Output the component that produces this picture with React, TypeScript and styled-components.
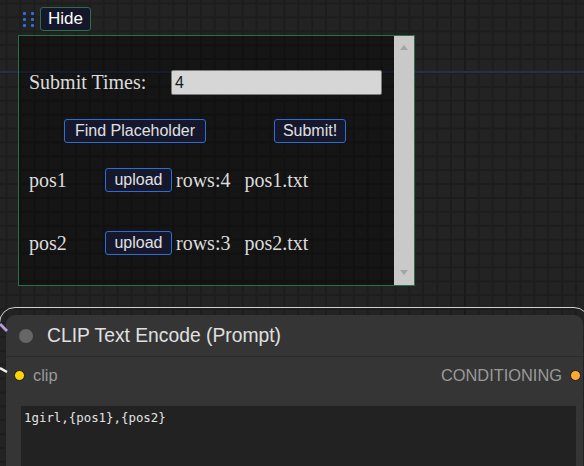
import * as React from 'react';
import styled, { createGlobalStyle } from 'styled-components';

const GlobalStyle = createGlobalStyle`
  html, body {
    margin: 0;
    height: 100%;
    overflow: hidden;
  }
  body {
    background-color: #232323;
    background-image:
      linear-gradient(to bottom, transparent 71px, #27304a 71px, #27304a 73px, transparent 73px),
      linear-gradient(90deg, transparent 464px, #1a1a1a 464px, #1a1a1a 466px, transparent 466px),
      linear-gradient(90deg, #1d1d1d 2px, transparent 2px),
      linear-gradient(#1d1d1d 2px, transparent 2px);
    background-size: 100% 100%, 100% 100%, 13.9px 13.9px, 13.9px 13.9px;
    background-repeat: no-repeat, no-repeat, repeat, repeat;
    background-position: 0 0, 0 0, 5.5px 0, 0 2.5px;
    font-family: 'Liberation Sans', Arial, sans-serif;
  }
`;

const Canvas = styled.div`
  position: relative;
  display: flex;
  flex-direction: column;
  align-items: flex-start;
  height: 466px;
  box-sizing: border-box;
  padding-top: 7px;
  overflow: hidden;
`;

const TopBar = styled.div`
  display: flex;
  align-items: center;
  gap: 5px;
  margin-left: 22px;
`;

const Handle = styled.div`
  display: grid;
  grid-template-columns: repeat(2, 3px);
  grid-auto-rows: 3px;
  column-gap: 5px;
  row-gap: 3px;
  padding: 0 1px;

  span {
    background: #2a6fe6;
    border-radius: 1px;
  }
`;

const HideButton = styled.button`
  height: 24px;
  padding: 0 7px;
  background: #14172a;
  border: 1px solid #2e6c4b;
  border-radius: 3px;
  color: #ffffff;
  font-family: 'Liberation Sans', Arial, sans-serif;
  font-size: 17px;
  line-height: 22px;
`;

const Panel = styled.div`
  display: flex;
  margin: 4px 0 0 18px;
  width: 397px;
  height: 251px;
  flex-shrink: 0;
  box-sizing: border-box;
  border: 1px solid #2e6c4b;
  background: rgba(0, 0, 0, 0.4);
`;

const PanelBody = styled.div`
  flex: 1;
  display: flex;
  flex-direction: column;
  padding: 34px 0 0 10px;
`;

const Row = styled.div<{ $top?: number }>`
  display: flex;
  align-items: center;
  margin-top: ${(p) => p.$top ?? 0}px;
  height: 24px;
`;

const Label = styled.span<{ $width: number }>`
  width: ${(p) => p.$width}px;
  color: #dcdcdc;
  font-family: 'Liberation Serif', 'Times New Roman', serif;
  font-size: 20px;
`;

const SerifText = styled.span<{ $left?: number }>`
  margin-left: ${(p) => p.$left ?? 0}px;
  color: #dcdcdc;
  font-family: 'Liberation Serif', 'Times New Roman', serif;
  font-size: 20px;
`;

const TimesInput = styled.input`
  width: 211px;
  height: 25px;
  box-sizing: border-box;
  margin-top: 1px;
  padding: 0 3px;
  background: #d6d6d6;
  border: 1px solid #7a7a7a;
  border-radius: 2px;
  color: #1a1a1a;
  font-family: 'Liberation Sans', Arial, sans-serif;
  font-size: 16px;
  outline: none;
`;

const BlueButton = styled.button<{ $left?: number; $width: number }>`
  margin-left: ${(p) => p.$left ?? 0}px;
  width: ${(p) => p.$width}px;
  height: 24px;
  padding: 0;
  background: #15172c;
  border: 1px solid #2f6dd0;
  border-radius: 3px;
  color: #e0e0e0;
  font-family: 'Liberation Sans', Arial, sans-serif;
  font-size: 16px;
  line-height: 20px;
`;

const Scrollbar = styled.div`
  width: 20px;
  background: #c9c9c9;
  display: flex;
  flex-direction: column;
  justify-content: space-between;
  align-items: center;
  padding: 9px 0 10px;
`;

const Arrow = styled.div<{ $down?: boolean }>`
  width: 0;
  height: 0;
  border-left: 4.5px solid transparent;
  border-right: 4.5px solid transparent;
  ${(p) =>
    p.$down ? 'border-top: 5px solid #a3a3a3;' : 'border-bottom: 5px solid #a3a3a3;'}
`;

const Node = styled.div`
  position: relative;
  margin: 29px 0 0 6px;
  width: 577px;
  height: 170px;
  flex-shrink: 0;
  background: #353535;
  border-radius: 9px;
  display: flex;
  flex-direction: column;

  &::before {
    content: '';
    position: absolute;
    top: -8px;
    left: -7px;
    right: -7px;
    bottom: -8px;
    border: 1.5px solid #cfcfcf;
    border-radius: 16px;
    pointer-events: none;
  }
`;

const NodeTitle = styled.div`
  display: flex;
  align-items: center;
  gap: 14px;
  height: 42px;
  padding-left: 13px;
  border-bottom: 1px solid #2b2b2b;
  color: #e0e0e0;
  font-size: 19.3px;
`;

const TitleDot = styled.span`
  width: 14px;
  height: 14px;
  border-radius: 50%;
  background: #666666;
`;

const Slots = styled.div`
  display: flex;
  align-items: center;
  justify-content: space-between;
  height: 38px;
  padding: 0 2px 0 8px;
  color: #9a9a9a;
  font-size: 16.4px;
`;

const Slot = styled.div`
  display: flex;
  align-items: center;
  gap: 8px;
`;

const SlotDot = styled.span<{ $color: string }>`
  width: 11px;
  height: 11px;
  box-sizing: border-box;
  border-radius: 50%;
  background: ${(p) => p.$color};
  border: 1px solid #1c1c1c;
`;

const Prompt = styled.textarea`
  margin: 12px 7px 0 15px;
  height: 80px;
  padding: 4px 3px;
  box-sizing: border-box;
  background: #222222;
  border: none;
  outline: none;
  resize: none;
  color: #e2e2e2;
  font-family: 'DejaVu Sans Mono', monospace;
  font-size: 12.4px;
  line-height: 16px;
`;

const Wires = styled.svg`
  position: absolute;
  left: 0;
  top: 318px;
`;

export default function App() {
  return (
    <>
      <GlobalStyle />
      <Canvas>
        <TopBar>
          <Handle>
            <span />
            <span />
            <span />
            <span />
            <span />
            <span />
          </Handle>
          <HideButton>Hide</HideButton>
        </TopBar>
        <Panel>
          <PanelBody>
            <Row>
              <Label $width={142}>Submit Times:</Label>
              <TimesInput defaultValue="4" />
            </Row>
            <Row $top={25}>
              <BlueButton $left={35} $width={142}>
                Find Placeholder
              </BlueButton>
              <BlueButton $left={68} $width={72}>
                Submit!
              </BlueButton>
            </Row>
            <Row $top={25}>
              <Label $width={76}>pos1</Label>
              <BlueButton $width={67}>upload</BlueButton>
              <SerifText $left={4}>rows:4</SerifText>
              <SerifText $left={14}>pos1.txt</SerifText>
            </Row>
            <Row $top={39}>
              <Label $width={76}>pos2</Label>
              <BlueButton $width={67}>upload</BlueButton>
              <SerifText $left={4}>rows:3</SerifText>
              <SerifText $left={14}>pos2.txt</SerifText>
            </Row>
          </PanelBody>
          <Scrollbar>
            <Arrow />
            <Arrow $down />
          </Scrollbar>
        </Panel>
        <Node>
          <NodeTitle>
            <TitleDot />
            CLIP Text Encode (Prompt)
          </NodeTitle>
          <Slots>
            <Slot>
              <SlotDot $color="#ffd500" />
              clip
            </Slot>
            <Slot>
              CONDITIONING
              <SlotDot $color="#ffa931" />
            </Slot>
          </Slots>
          <Prompt defaultValue="1girl,{pos1},{pos2}" spellCheck={false} />
        </Node>
        <Wires width="8" height="60" viewBox="0 0 8 60">
          <path d="M0 6 L7 13" stroke="#b39ddb" strokeWidth="3" />
          <path d="M0 50 L7 54" stroke="#f0f0f0" strokeWidth="2.5" />
        </Wires>
      </Canvas>
    </>
  );
}
